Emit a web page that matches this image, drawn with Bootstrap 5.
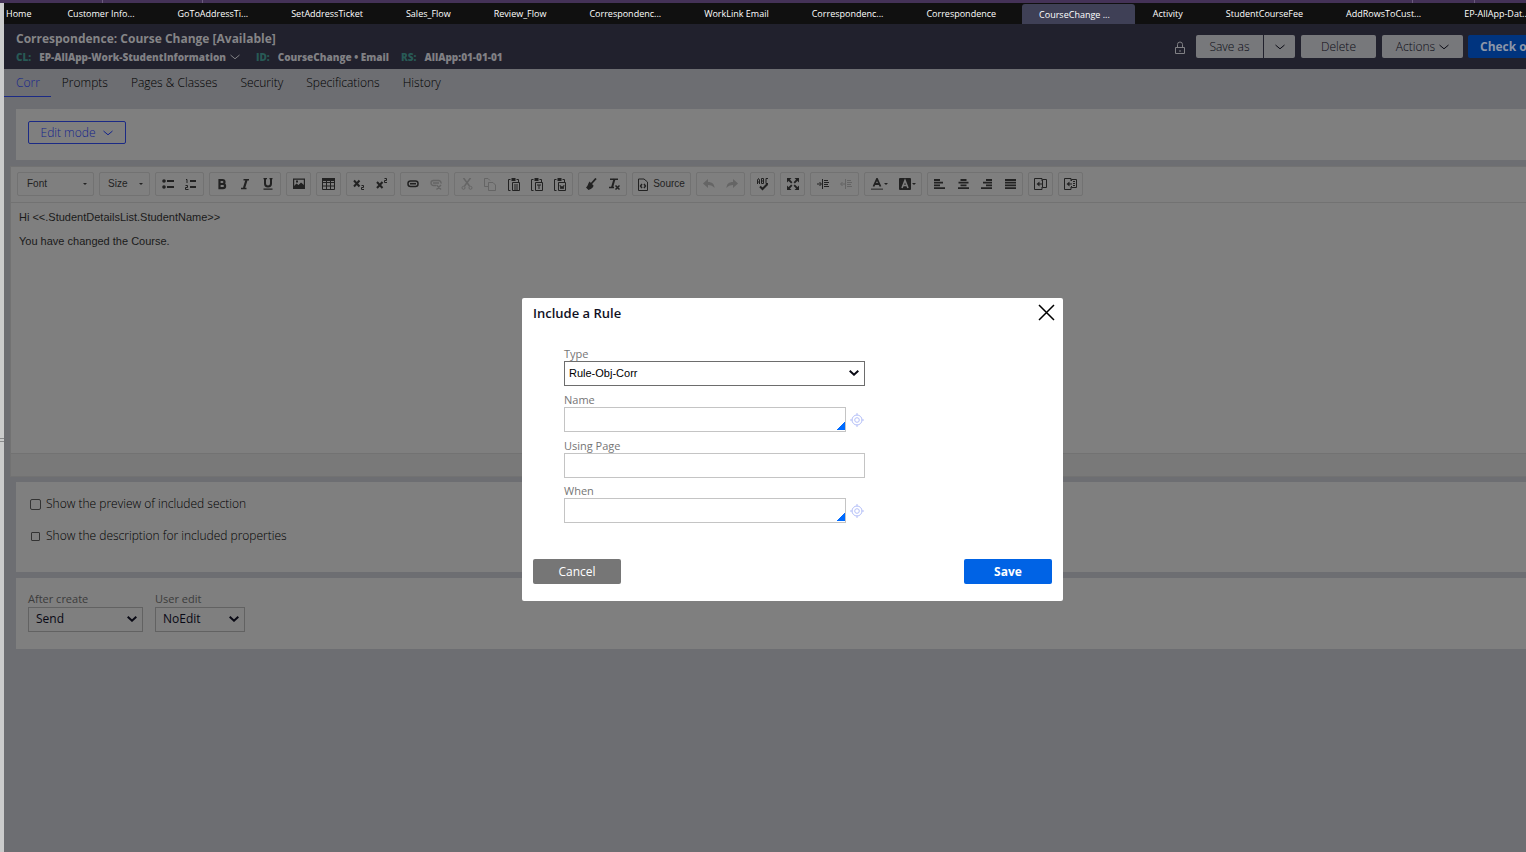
<!DOCTYPE html>
<html lang="en">
<head>
<meta charset="utf-8">
<meta name="viewport" content="width=device-width, initial-scale=1">
<title>Correspondence: Course Change</title>
<link rel="stylesheet" href="https://cdn.jsdelivr.net/npm/bootstrap@5.3.0/dist/css/bootstrap.min.css">
<style>
:root{--ink:#080814;--panel:#7f7f7f;--line:#727272;--blue:#1b2a85}
body{font-family:"Open Sans",sans-serif;font-size:12px;line-height:16px;color:var(--ink);background:#cbcccc;min-height:100vh;overflow:hidden}
a{text-decoration:none;color:inherit}
svg{display:block;fill:none;stroke:currentColor}
.browser-edge{height:3px;background:#443257;padding-left:102px}
.browser-edge i{width:1px;background:#6a5a7c}
.browser-edge .e2{margin-left:99px}
.browser-edge .e4{margin:0 51px 0 61px}
.workspace{background:#6d6e72;margin-left:4px;min-height:calc(100vh - 3px);overflow:hidden}
.grip{position:absolute;left:0;top:438px;width:4px;height:4px;border:solid #8a8b8d;border-width:1px 0}
.doc-tabs{height:21px;background:#101010;font-size:9px;line-height:21px;color:#fff;font-weight:500;overflow:hidden}
.doc-tabs a{padding:0 25px 0 17px;margin-right:1px;white-space:nowrap;flex:none}
.doc-tabs a:first-child{padding:0 18px 0 2px}
.doc-tabs a.current{background:#3f4056;border-radius:3px 3px 0 0;margin-top:1px}
.rule-head{height:45px;background:#21212d;color:#808084;padding:7px 0 0 12px;overflow:hidden}
.rule-head h1{font-size:12px;line-height:16px;font-weight:700;margin:0;color:#858587}
.rule-meta{font-size:10px;line-height:20px;font-weight:800;white-space:nowrap}
.rule-meta dt{color:#285a56;font-weight:800}
.rule-meta dd{margin:0}
.head-tools{padding-top:4px;margin-right:-24px}
.lock{margin:6px 9px 0 0}
.head-btn{height:23px;border:0;border-radius:2px;background:#77787b;color:#0c0c16;font-size:12px;font-weight:300;padding:0;line-height:23px}
.head-btn.save-as{width:67px}
.head-btn.more{width:31px;margin:0 6px 0 1px}
.head-btn.del{width:75px;margin-right:6px}
.head-btn.acts{width:81px;margin-right:5px}
.head-btn.primary{background:#00347f;color:#8c96a8;font-weight:700;width:82px;padding-left:12px;text-align:left}
.rule-tabs{height:28px;font-size:12px;line-height:28px;font-weight:300;color:#000}
.rule-tabs a{padding:0 12px 0 11px}
.rule-tabs a.current{color:#14248c;border-bottom:1px solid var(--blue);padding-left:12px;padding-right:11px}
.panel{background:var(--panel);margin:0 0 6px 12px}
.mode-panel{margin-top:12px;height:51px;padding:12px}
.mode-btn{border:1px solid var(--blue);border-radius:2px;color:#14248c;background:none;font-size:12px;font-weight:300;width:98px;height:23px;padding:0}
.editor{margin:0 0 5px 6px;border:1px solid var(--line);border-right:0;background:var(--panel);font-family:"Liberation Sans",Arial,sans-serif;color:#1a1a1a;height:311px}
.ed-bar{padding:5px 0 6px 6px;gap:5px;border-bottom:1px solid var(--line)}
.ed-group{height:24px;border:1px solid var(--line);border-radius:2px;flex:none}
.ed-group button{background:none;border:0;padding:0;flex:1;display:flex;align-items:center;justify-content:center;color:#222;gap:1px}
.ed-group button:disabled{color:#656565}
.ed-group.combo{font-size:10px;width:77px}
.ed-group.combo button{justify-content:space-between;padding:0 6px 0 9px}
.ed-group.combo.size{width:51px}
.ed-group.combo.size button{padding:0 6px 0 8px}
.g1{width:25px}.g2{width:49px}.g3{width:72px}.g4{width:96px}.g5{width:119px}.gc{width:58px}
.ed-group.gs{width:59px}.ed-group.gs button{font-size:10px;gap:5px}
.drop{border:solid transparent;border-width:2px 2px 0;border-top-color:#222}
.ed-text{font-size:11px;line-height:16px;padding:6px 8px}
.ed-text p{margin:0 0 8px}
.ed-foot{height:23px;background:#797979;border-top:1px solid var(--line)}
.opts{padding:14px 14px 0;height:90px}
.opts label{padding-left:5px;font-weight:300;color:#000}
.opts input{appearance:none;width:11px;height:11px;border:1px solid #333;border-radius:2px;margin:0}
.opts .thin{width:9px;height:9px;margin:0 1px;border-radius:1px}
.send{padding:13px 12px 0;height:71px;gap:12px}
.field-label{display:block;font-size:11px;line-height:16px;color:#3b3b3b}
.pick{display:block;height:25px;border:1px solid #626262;border-radius:0;font-size:12px;line-height:16px;padding:0 20px 2px 7px;color:var(--ink);background:url("data:image/svg+xml,%3Csvg xmlns='http://www.w3.org/2000/svg' width='10' height='6' viewBox='0 0 10 6' fill='none' stroke='%23090914' stroke-width='2'%3E%3Cpath d='M.7.8 5 4.7 9.3.8'/%3E%3C/svg%3E") no-repeat right 5px top 8px;appearance:none}
.pick.after{width:115px}.pick.edit{width:90px}
.shade{position:absolute;inset:0;padding:298px 0 0 59px}
.rule-dialog{width:541px;height:303px;background:#fff;border-radius:2px;color:#11111f;padding:0 11px}
.rule-dialog h2{font-size:13px;line-height:30px;font-weight:600;margin:0}
.x-btn{border:0;background:none;padding:0 0 2px;margin-right:-3px}
.fields{padding:19px 31px 0;width:363px}
.fields .field-label{color:#757575;line-height:14px}
.row-field{margin-bottom:7px}
.row-field.tight{margin-bottom:6px}
.fields .pick{width:100%;padding-left:4px;font-family:"Liberation Sans",Arial,sans-serif;font-size:11px;color:#000;border-color:#6d6d6d}
.text-in{width:100%;height:25px;border:1px solid #c4c4c4;border-radius:0;padding:0 4px;font-size:11px}
.lookup{width:282px;background:linear-gradient(135deg,transparent 50%,#006bff 50%) no-repeat right bottom 1px/8px 8px #fff}
.target{border:0;background:none;padding:0;color:#b4bff8}
.dlg-foot{margin-top:36px}
.dlg-btn{width:88px;height:25px;border:0;border-radius:2px;color:#fff;font-size:12px;background:#767676}
.dlg-btn.save{background:#0063e5;font-weight:700}
</style>
</head>
<body>
<div class="browser-edge d-flex"><i></i><i class="e2"></i><i class="ms-auto"></i><i class="e4"></i></div>
<span class="grip"></span>
<div class="workspace">
  <nav class="doc-tabs d-flex" aria-label="Open rules">
    <a href="#">Home</a><a href="#">Customer Info...</a><a href="#">GoToAddressTi...</a><a href="#">SetAddressTicket</a><a href="#">Sales_Flow</a><a href="#">Review_Flow</a><a href="#">Correspondenc...</a><a href="#">WorkLink Email</a><a href="#">Correspondenc...</a><a href="#">Correspondence</a><a href="#" class="current">CourseChange ...</a><a href="#">Activity</a><a href="#">StudentCourseFee</a><a href="#">AddRowsToCust...</a><a href="#">EP-AllApp-Dat...</a>
  </nav>
  <header class="rule-head d-flex">
    <div>
      <h1>Correspondence: Course Change [Available]</h1>
      <dl class="rule-meta d-flex m-0">
        <dt class="me-2">CL:</dt><dd class="d-flex align-items-center gap-1">EP-AllApp-Work-StudentInformation <svg width="10" height="6" viewBox="0 0 10 6"><path d="M.5 1 5 4.800 9.500 1"/></svg></dd>
        <dt class="ms-3 me-2">ID:</dt><dd>CourseChange • Email</dd>
        <dt class="ms-2 ps-1 me-2">RS:</dt><dd>AllApp:01-01-01</dd>
      </dl>
    </div>
    <div class="head-tools ms-auto d-flex align-items-start">
      <svg class="lock" width="14" height="14" viewBox="0 0 14 14"><path d="M2.500 6.500h9v6h-9zM4.500 6V3.500a2.500 2.500 0 0 1 5 0V6M7 9v2"/></svg>
      <button class="head-btn save-as rounded-end-0">Save as</button>
      <button class="head-btn more rounded-start-0 d-flex align-items-center justify-content-center" aria-label="More save options"><svg width="10" height="6" viewBox="0 0 10 6"><path d="M.5 1 5 4.800 9.500 1"/></svg></button>
      <button class="head-btn del">Delete</button>
      <button class="head-btn acts d-flex align-items-center justify-content-center gap-1">Actions<svg width="10" height="6" viewBox="0 0 10 6"><path d="M.5 1 5 4.800 9.500 1"/></svg></button>
      <button class="head-btn primary text-nowrap">Check out</button>
    </div>
  </header>
  <nav class="rule-tabs d-flex" aria-label="Rule sections">
    <a href="#" class="current">Corr</a><a href="#">Prompts</a><a href="#">Pages &amp; Classes</a><a href="#">Security</a><a href="#">Specifications</a><a href="#">History</a>
  </nav>
  <section class="panel mode-panel">
    <button class="mode-btn d-flex align-items-center justify-content-center gap-2">Edit mode<svg width="10" height="6" viewBox="0 0 10 6"><path d="M.5 1 5 4.800 9.500 1"/></svg></button>
  </section>
  <section class="editor d-flex flex-column">
    <div class="ed-bar d-flex" role="toolbar">
      <div class="ed-group combo d-flex"><button>Font<span class="drop"></span></button></div>
      <div class="ed-group combo size d-flex"><button>Size<span class="drop"></span></button></div>
      <div class="ed-group g2 d-flex">
        <button aria-label="Bulleted list"><svg width="12" height="12" viewBox="0 0 12 12"><g fill="currentColor" stroke="none"><circle cx="2" cy="3" r="1.800"/><circle cx="2" cy="9" r="1.800"/><path d="M5 2h7v2H5zM5 8h7v2H5z"/></g></svg></button>
        <button aria-label="Numbered list"><svg width="12" height="12" viewBox="0 0 12 12"><path stroke-width="2" d="M5 3h6M5 9h6"/><path d="M1 1.500h1V5M.5 7.500h2v2h-2v2h3"/></svg></button></div>
      <div class="ed-group g3 d-flex">
        <button aria-label="Bold"><svg width="12" height="12" viewBox="0 0 12 12"><path stroke-width="2.200" d="M3.500 2H6.500a1.800 1.800 0 0 1 0 4H3.500zM3.500 6H7a2 2 0 0 1 0 4.200H3.500z"/></svg></button>
        <button aria-label="Italic"><svg width="12" height="12" viewBox="0 0 12 12"><path stroke-width="1.500" d="M4.500 1.700H10M2 10.500h5.500"/><path stroke-width="2.200" d="M7.500 2 5 10"/></svg></button>
        <button aria-label="Underline"><svg width="12" height="12" viewBox="0 0 12 12"><path stroke-width="2" d="M3 0v5.500a2.700 2.700 0 0 0 6 0V0"/><path stroke-width="1.300" d="M1.500 11.200h9M1.500.5H5M7.500.5h3"/></svg></button></div>
      <div class="ed-group g1 d-flex"><button aria-label="Image"><svg width="12" height="12" viewBox="0 0 12 12"><path stroke-width="1.200" d="M.6 1.200h10.800v9.200H.6z"/><path fill="currentColor" stroke="none" d="M1 10V8l2.500-2.500L5.500 7 8 4.500l3 2.500v3zM3 2.500h2v2H3z"/></svg></button></div>
      <div class="ed-group g1 d-flex"><button aria-label="Table"><svg width="13" height="12" viewBox="0 0 13 12"><path d="M.5.5h12v11H.5zM.5 4.500h12M.5 8h12M4.500 2v10M8.500 2v10"/><path stroke-width="3" d="M0 1.500h13"/></svg></button></div>
      <div class="ed-group g2 d-flex">
        <button aria-label="Subscript"><svg width="12" height="12" viewBox="0 0 12 12"><path stroke-width="2" d="m1 2.500 5.500 6M6.500 2.500 1 8.500"/><path d="M8.500 7.500h2v2h-2v2H11"/></svg></button>
        <button aria-label="Superscript"><svg width="12" height="12" viewBox="0 0 12 12"><path stroke-width="2" d="m1 4 5.500 6M6.500 4 1 10"/><path d="M8.500.5h2v2h-2v2H11"/></svg></button></div>
      <div class="ed-group g2 d-flex">
        <button aria-label="Link"><svg width="12" height="12" viewBox="0 0 12 12"><rect x="1" y="3" width="10" height="5.500" rx="2.500" stroke-width="1.500"/><path stroke-width="1.600" d="M3 5.700h6"/></svg></button>
        <button disabled aria-label="Unlink"><svg width="12" height="12" viewBox="0 0 12 12"><path stroke-width="1.400" d="M6 7.500H3.500a2.500 2.500 0 0 1 0-5h5A2.500 2.500 0 0 1 11 5.500M3 5h6M6.500 7l4.500 4.500M11 7l-4.500 4.500"/></svg></button></div>
      <div class="ed-group g5 d-flex">
        <button disabled aria-label="Cut"><svg width="12" height="12" viewBox="0 0 12 12"><path stroke-width="1.500" d="m2.500 0 6 8M9.500 0l-6 8"/><circle cx="2.500" cy="9.800" r="1.500"/><circle cx="9.500" cy="9.800" r="1.500"/></svg></button>
        <button disabled aria-label="Copy"><svg width="12" height="13" viewBox="0 0 12 13"><path d="M4 8.500H.5v-8H4l2 2M4.500 4.500H9L11.500 7v5.500h-7z"/></svg></button>
        <button aria-label="Paste"><svg width="12" height="13" viewBox="0 0 12 13"><path d="M2.500 1.500h-2v11h2M8.500 1.500h2V4M4.500 4.500h7v8h-7zM6 7h4M6 9h4M6 11h4"/><path stroke-width="3" d="M3.500 1.500h4"/></svg></button>
        <button aria-label="Paste as text"><svg width="12" height="13" viewBox="0 0 12 13"><path d="M2.500 1.500h-2v11h2M8.500 1.500h2V4M4.500 4.500h7v8h-7zM6 7h4M8 7v4"/><path stroke-width="3" d="M3.500 1.500h4"/></svg></button>
        <button aria-label="Paste from Word"><svg width="12" height="13" viewBox="0 0 12 13"><path d="M2.500 1.500h-2v11h2M8.500 1.500h2V4M4.500 4.500h7v8h-7zM6 7l1 4 1-3 1 3 1-4"/><path stroke-width="3" d="M3.500 1.500h4"/></svg></button></div>
      <div class="ed-group g2 d-flex">
        <button aria-label="Copy formatting"><svg width="12" height="12" viewBox="0 0 12 12"><path stroke-width="1.800" d="m6 6 5-5.500"/><path fill="currentColor" stroke="none" d="m4.500 3.500 4 4c0 2-3 4-5 4.500L1 9.500C3 8 3 5.500 4.500 3.500"/></svg></button>
        <button aria-label="Remove format"><svg width="12" height="12" viewBox="0 0 12 12"><path stroke-width="1.600" d="M2 1.200h8M1 9.500h5"/><path stroke-width="2" d="M6.500 1 4 9.500"/><path stroke-width="1.500" d="m7.500 7.500 4 4M11.500 7.500l-4 4"/></svg></button></div>
      <div class="ed-group gs d-flex"><button><svg width="10" height="13" viewBox="0 0 10 13"><path d="M.5 1h5.500L9.500 4v8.500h-9z"/><path stroke-width="1.400" d="M4 6 2.500 8 4 10M6 6l1.500 2L6 10"/></svg>Source</button></div>
      <div class="ed-group g2 d-flex">
        <button disabled aria-label="Undo"><svg width="12" height="10" viewBox="0 0 12 10"><path fill="currentColor" stroke="none" d="M0 4.500 5 0v3c4 0 6.500 2 6.500 6C10 7 8 6 5 6v3z"/></svg></button>
        <button disabled aria-label="Redo"><svg width="12" height="10" viewBox="0 0 12 10"><path fill="currentColor" stroke="none" d="M12 4.500 7 0v3C3 3 .5 5 .5 9 2 7 4 6 7 6v3z"/></svg></button></div>
      <div class="ed-group g1 d-flex"><button aria-label="Spell check"><svg width="12" height="13" viewBox="0 0 12 13"><path d="M.5 6V2l1-1.500 1 1.500v4M.5 4h2M4.500.5v5h2v-5zM4.500 3h2M11 .5H9v5h2"/><path stroke-width="2" d="m3 8.500 2.500 2.500 5-5"/></svg></button></div>
      <div class="ed-group g1 d-flex"><button aria-label="Maximize"><svg width="12" height="12" viewBox="0 0 12 12"><g fill="currentColor" stroke="none"><path d="M0 0h4.500L0 4.500zM12 0H7.500L12 4.500zM0 12h4.500L0 7.500zM12 12H7.500L12 7.500z"/></g><path stroke-width="1.800" d="m1 1 3.800 3.800M11 1 7.200 4.800M1 11l3.800-3.800M11 11 7.200 7.200"/></svg></button></div>
      <div class="ed-group g2 d-flex">
        <button aria-label="Increase indent"><svg width="12" height="12" viewBox="0 0 12 12"><path d="M5.500 1v10M7 2.500h4M7 4.500h5M7 6.500h4M7 8.500h5M0 6h4M2.500 4l2 2-2 2"/></svg></button>
        <button disabled aria-label="Decrease indent"><svg width="12" height="12" viewBox="0 0 12 12"><path d="M5.500 1v10M7 2.500h4M7 4.500h5M7 6.500h4M7 8.500h5M1 6h4M2.500 4l-2 2 2 2"/></svg></button></div>
      <div class="ed-group gc d-flex">
        <button aria-label="Text color"><svg width="12" height="12" viewBox="0 0 12 12"><path stroke-width="1.800" d="M2.500 8.500 6 .8l3.500 7.700M4 6h4"/><path stroke="#444" stroke-width="1.500" d="M0 11.200h12"/></svg><span class="drop"></span></button>
        <button aria-label="Background color"><svg width="12" height="12" viewBox="0 0 12 12"><rect width="12" height="12" rx="1" fill="currentColor" stroke="none"/><path stroke="#7f7f7f" stroke-width="1.600" d="M3 10 6 2.500 9 10M4 7.500h4"/></svg><span class="drop"></span></button></div>
      <div class="ed-group g4 d-flex">
        <button aria-label="Align left"><svg width="11" height="10" viewBox="0 0 11 10"><path stroke-width="1.800" d="M0 1h6M0 3.700h9M0 6.400h6M0 9.100h11"/></svg></button>
        <button aria-label="Align center"><svg width="11" height="10" viewBox="0 0 11 10"><path stroke-width="1.800" d="M2.500 1h6M.5 3.700h10M2.500 6.400h6M0 9.100h11"/></svg></button>
        <button aria-label="Align right"><svg width="11" height="10" viewBox="0 0 11 10"><path stroke-width="1.800" d="M5 1h6M2 3.700h9M5 6.400h6M0 9.100h11"/></svg></button>
        <button aria-label="Justify"><svg width="11" height="10" viewBox="0 0 11 10"><path stroke-width="1.800" d="M0 1h11M0 3.700h11M0 6.400h11M0 9.100h11"/></svg></button></div>
      <div class="ed-group g1 d-flex"><button aria-label="Insert property"><svg width="13" height="12" viewBox="0 0 13 12"><path d="M8 3V.5H.5v11H8V9M8.500 1.500h4v8h-4z"/><path fill="currentColor" stroke="none" d="M2.500 6 5.500 3.500v2H8v1H5.500v2z"/></svg></button></div>
      <div class="ed-group g1 d-flex"><button aria-label="Include rule"><svg width="13" height="12" viewBox="0 0 13 12"><path d="M7 3V.5H.5v11H7V9M7.500 3V1.500h5v8h-5V8M9 3.500h2M9 5.500h2M9 7.500h2"/><path fill="currentColor" stroke="none" d="M2.500 6 5.500 3.500v2H8v1H5.500v2z"/></svg></button></div>
    </div>
    <div class="ed-text flex-fill"><p>Hi &lt;&lt;.StudentDetailsList.StudentName&gt;&gt;</p><p>You have changed the Course.</p></div>
    <div class="ed-foot"></div>
  </section>
  <section class="panel opts">
    <div class="d-flex align-items-center mb-3"><input type="checkbox" id="o1"><label for="o1">Show the preview of included section</label></div>
    <div class="d-flex align-items-center"><input type="checkbox" class="thin" id="o2"><label for="o2">Show the description for included properties</label></div>
  </section>
  <section class="panel send d-flex">
    <div><label class="field-label" for="after">After create</label><select class="pick after" id="after"><option>Send</option></select></div>
    <div><label class="field-label" for="edit">User edit</label><select class="pick edit" id="edit"><option>NoEdit</option></select></div>
  </section>
</div>
<div class="shade d-flex justify-content-center align-items-start">
  <div class="rule-dialog" role="dialog" aria-labelledby="dlg">
    <div class="d-flex justify-content-between align-items-center"><h2 id="dlg">Include a Rule</h2>
      <button class="x-btn" aria-label="Close"><svg width="17" height="17" viewBox="0 0 17 17"><path stroke-width="1.500" d="m1 1 15 15M16 1 1 16"/></svg></button></div>
    <div class="fields">
      <div class="row-field"><label class="field-label" for="ty">Type</label><select class="pick" id="ty"><option>Rule-Obj-Corr</option></select></div>
      <div class="row-field"><label class="field-label" for="nm">Name</label><div class="d-flex gap-1"><input class="text-in lookup" id="nm"><button class="target" aria-label="Open name"><svg width="14" height="14" viewBox="0 0 14 14"><circle cx="7" cy="7" r="5"/><circle cx="7" cy="7" r="2.300"/><path d="M7 0v2.500M7 11.500V14M0 7h2.500M11.500 7H14"/></svg></button></div></div>
      <div class="row-field tight"><label class="field-label" for="up">Using Page</label><input class="text-in d-block" id="up"></div>
      <div><label class="field-label" for="wh">When</label><div class="d-flex gap-1"><input class="text-in lookup" id="wh"><button class="target" aria-label="Open when"><svg width="14" height="14" viewBox="0 0 14 14"><circle cx="7" cy="7" r="5"/><circle cx="7" cy="7" r="2.300"/><path d="M7 0v2.500M7 11.500V14M0 7h2.500M11.500 7H14"/></svg></button></div></div>
    </div>
    <div class="dlg-foot d-flex justify-content-between"><button class="dlg-btn">Cancel</button><button class="dlg-btn save">Save</button></div>
  </div>
</div>
<script src="https://cdn.jsdelivr.net/npm/bootstrap@5.3.0/dist/js/bootstrap.bundle.min.js"></script>
</body>
</html>
